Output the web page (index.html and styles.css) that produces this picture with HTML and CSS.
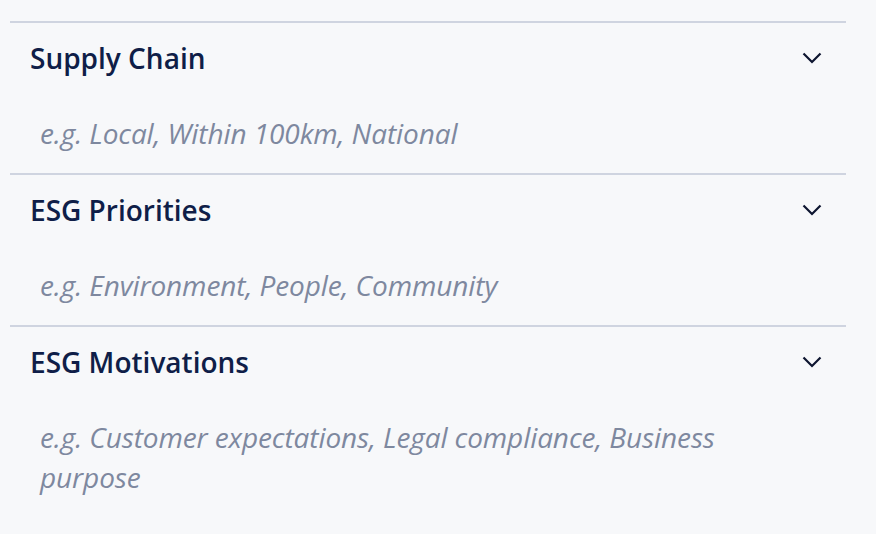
FILE: index.html
```html
<!DOCTYPE html>
<html>
<head>
<meta charset="utf-8">
<link rel="stylesheet" href="styles.css">
</head>
<body>
<div class="list">
  <section class="item">
    <div class="head">
      <h3 class="title">Supply Chain</h3>
      <svg class="chev" width="20" height="12" viewBox="0 0 20 12"><path d="M1.5 1.5 L10 10 L18.5 1.5" fill="none" stroke="#0d1530" stroke-width="2.2"/></svg>
    </div>
    <div class="field">e.g. Local, Within 100km, National</div>
  </section>
  <section class="item">
    <div class="head">
      <h3 class="title">ESG Priorities</h3>
      <svg class="chev" width="20" height="12" viewBox="0 0 20 12"><path d="M1.5 1.5 L10 10 L18.5 1.5" fill="none" stroke="#0d1530" stroke-width="2.2"/></svg>
    </div>
    <div class="field">e.g. Environment, People, Community</div>
  </section>
  <section class="item">
    <div class="head">
      <h3 class="title">ESG Motivations</h3>
      <svg class="chev" width="20" height="12" viewBox="0 0 20 12"><path d="M1.5 1.5 L10 10 L18.5 1.5" fill="none" stroke="#0d1530" stroke-width="2.2"/></svg>
    </div>
    <div class="field">e.g. Customer expectations, Legal compliance, Business purpose</div>
  </section>
</div>
</body>
</html>
```
FILE: styles.css
```css
html, body {
  margin: 0;
  background: #f7f8fa;
}
body {
  padding: 21px 30px 0 10px;
  font-family: "Open Sans", "Noto Sans", sans-serif;
}
.list {
  display: flex;
  flex-direction: column;
}
.item {
  border-top: 2px solid #cfd4e0;
}
.head {
  display: flex;
  align-items: center;
  justify-content: space-between;
  padding: 17px 24px 21px 20px;
}
.title {
  margin: 0;
  font-size: 28px;
  line-height: 36px;
  font-weight: 600;
  color: #0f1e48;
}
.chev {
  display: block;
}
.field {
  padding: 16px 100px 20px 30px;
  font-size: 28px;
  line-height: 40px;
  font-style: italic;
  letter-spacing: -0.1px;
  color: #7e889f;
}
```
